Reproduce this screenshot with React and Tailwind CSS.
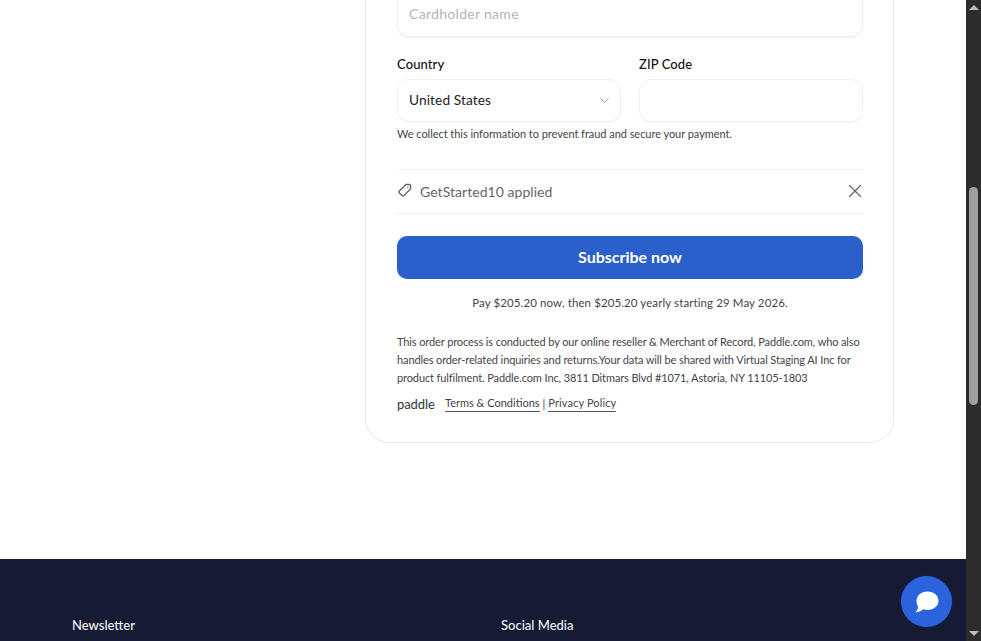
import { ChevronDown, X } from 'lucide-react';

function Field({ label, children }) {
    return (
        <div className="flex-1 min-w-0">
            <label className="block h-[21px] text-[13px] leading-[21px] font-medium text-[#111111] tracking-[0.1px]">{label}</label>
            <div className="mt-[4px] h-[43px] px-[11px] flex items-center justify-between rounded-[12px] border border-[#f0f0f2] shadow-[0_1px_1px_rgba(0,0,0,0.04)] text-[13.7px] text-[#222222]">
                {children}
            </div>
        </div>
    );
}

function TagIcon() {
    return (
        <svg width="15" height="15" viewBox="0 0 15 15" fill="none" stroke="#66666c" strokeWidth="1.4" className="-mt-[2px]">
            <path d="M9 1.5H12.2C13 1.5 13.5 2 13.5 2.8V6L7 12.6C6.4 13.2 5.6 13.2 5 12.6L2.3 9.9C1.7 9.3 1.7 8.6 2.3 8Z" strokeLinejoin="round" />
            <circle cx="10.8" cy="4.2" r="0.7" fill="#66666c" stroke="none" />
        </svg>
    );
}

function ChatIcon() {
    return (
        <svg width="26" height="24" viewBox="0 0 26 24" fill="#ffffff">
            <path d="M13.5 1.5C19.8 1.5 24.5 5.6 24.5 10.8C24.5 16 19.8 20 13.5 20C12 20 10.7 19.8 9.4 19.3C7.6 20.9 5.2 22 2.4 22.2C2 22.2 1.8 21.8 2 21.5C3.2 20.2 4 18.7 4.1 16.7C2.9 15.1 2.5 13 2.5 10.8C2.5 5.6 7.2 1.5 13.5 1.5Z" />
        </svg>
    );
}

export default function App() {
    return (
        <div className="h-[641px] flex overflow-hidden bg-white font-['Lato',sans-serif]">
            <div className="relative flex-1 min-w-0 overflow-hidden">
                <main className="h-[559px] overflow-hidden flex justify-end pr-[72px]">
                    <div className="w-[529px] h-[483px] -mt-[40px] pl-[31px] pr-[30px] pt-[6px] rounded-[24px] border border-[#e9e9ec]">
                        <div className="h-[70px] px-[11px] flex items-end pb-[12px] rounded-[12px] border border-[#f0f0f2] shadow-[0_1px_1px_rgba(0,0,0,0.06)] text-[14px] leading-[21px] text-[#b4b4b8] tracking-[0.3px]">
                            Cardholder name
                        </div>

                        <div className="mt-[17px] flex gap-[18px]">
                            <Field label="Country">
                                <span className="tracking-[0.1px]">United States</span>
                                <ChevronDown size={15} strokeWidth={1.25} className="text-[#777777] -mr-[3px]" />
                            </Field>
                            <Field label="ZIP Code" />
                        </div>
                        <p className="mt-[5px] text-[11px] leading-[14px] text-[#44444a] tracking-[-0.04px]">
                            We collect this information to prevent fraud and secure your payment.
                        </p>

                        <div className="mt-[28px] h-[45px] flex items-center justify-between border-y border-[#f0f0f2]">
                            <div className="flex items-center text-[14px] text-[#66666c] tracking-[0.05px]">
                                <TagIcon />
                                <span className="ml-[8px]">GetStarted10 applied</span>
                            </div>
                            <X size={22} strokeWidth={1.4} className="text-[#666666] -mr-[3px] -mt-[2px]" />
                        </div>

                        <button className="mt-[22px] w-full h-[43px] pb-[1px] rounded-[10px] bg-[#2b5fcb] text-white text-[16px] font-bold">
                            Subscribe now
                        </button>

                        <p className="mt-[15px] text-center text-[11.5px] leading-[18px] text-[#44444a] tracking-[0.1px]">
                            Pay $205.20 now, then $205.20 yearly starting 29 May 2026.
                        </p>

                        <p className="mt-[21px] text-[11px] leading-[18px] text-[#44444a] tracking-[-0.11px]">
                            This order process is conducted by our online reseller &amp; Merchant of Record, Paddle.com, who also handles order-related inquiries and returns.Your data will be shared with Virtual Staging AI Inc for product fulfilment. Paddle.com Inc, 3811 Ditmars Blvd #1071, Astoria, NY 11105-1803
                        </p>

                        <div className="mt-[8px] flex items-center text-[11px] leading-[16px] text-[#44444a]">
                            <span className="w-[48px] text-[13px] text-[#33333a] tracking-[-0.1px]">paddle</span>
                            <a className="border-b border-[#55555a]">Terms &amp; Conditions</a>
                            <span className="mx-[3px]">|</span>
                            <a className="border-b border-[#55555a] tracking-[0.12px]">Privacy Policy</a>
                        </div>
                    </div>
                </main>

                <footer className="h-[82px] bg-[#161b33] pt-[57px] pl-[72px] flex text-[13px] leading-[18px] font-medium text-[#f1f2f6]">
                    <div className="w-[429px]">Newsletter</div>
                    <div>Social Media</div>
                </footer>

                <button className="absolute left-[901px] top-[576px] w-[51px] h-[51px] rounded-full bg-[#2b63dc] shadow-[0_0_2px_#0b2a80] flex items-center justify-center">
                    <ChatIcon />
                </button>
            </div>

            <div className="w-[15px] shrink-0 bg-[#2c2c2c] flex flex-col items-center justify-between py-[5px]">
                <div className="w-0 h-0 border-x-[5px] border-x-transparent border-b-[5px] border-b-[#c0c0c0]" />
                <div className="w-0 h-0 border-x-[5px] border-x-transparent border-t-[5px] border-t-[#c0c0c0]" />
            </div>
            <div className="absolute left-[969px] top-[187px] w-[9px] h-[218px] rounded-[5px] bg-[#9f9f9f]" />
        </div>
    );
}
